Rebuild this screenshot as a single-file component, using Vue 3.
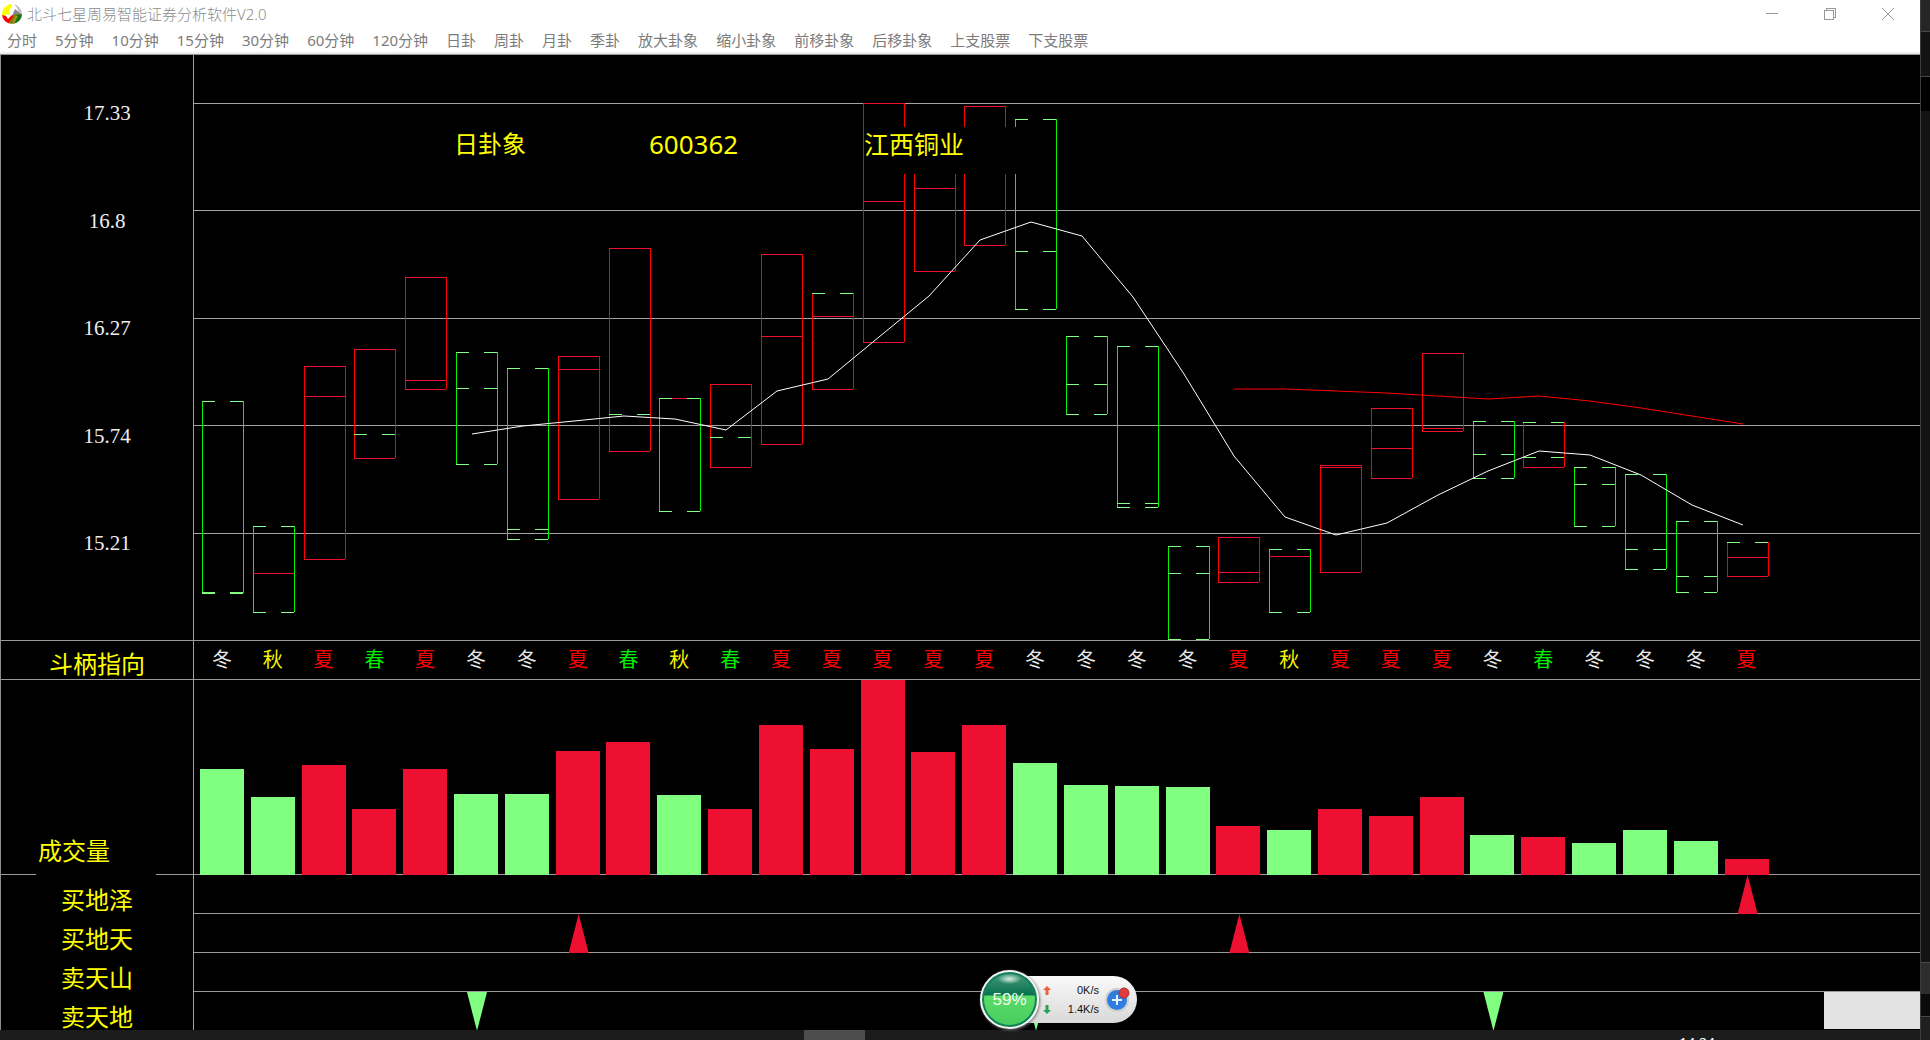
<script setup>
const menus = [
  '分时', '5分钟', '10分钟', '15分钟', '30分钟', '60分钟', '120分钟', '日卦', '周卦', '月卦', '季卦',
  '放大卦象', '缩小卦象', '前移卦象', '后移卦象', '上支股票', '下支股票',
]

const prices = ['17.33', '16.8', '16.27', '15.74', '15.21']
const gridLines = [48, 155, 263, 370, 478]

// Width of one trading period in the plot's own units.
const PITCH = 1728 / 34
const PLOT_TOP = 55

// Each row: side colour, then level pairs [y, line colour].
const candles = [
  ['g', [401, 'g'], [592, 'g'], [593, 'g']],
  ['g', [526, 'g'], [573, 'r'], [612, 'g']],
  ['r', [366, 'r'], [396, 'r'], [559, 'r']],
  ['r', [349, 'r'], [434, 'g'], [458, 'r']],
  ['r', [277, 'r'], [380, 'r'], [389, 'r']],
  ['g', [352, 'g'], [388, 'g'], [464, 'g']],
  ['g', [368, 'g'], [529, 'g'], [539, 'g']],
  ['r', [356, 'r'], [369, 'r'], [499, 'r']],
  ['r', [248, 'r'], [414, 'g'], [451, 'r']],
  ['g', [398, 'r'], [398, 'g'], [511, 'g']],
  ['r', [384, 'r'], [437, 'g'], [467, 'r']],
  ['r', [254, 'r'], [336, 'r'], [444, 'r']],
  ['r', [293, 'g'], [316, 'r'], [389, 'r']],
  ['r', [103, 'r'], [201, 'r'], [342, 'r']],
  ['r', [150, 'r'], [188, 'r'], [271, 'r']],
  ['r', [106, 'r'], [150, 'r'], [245, 'r']],
  ['g', [119, 'g'], [251, 'g'], [309, 'g']],
  ['g', [336, 'g'], [384, 'g'], [414, 'g']],
  ['g', [346, 'g'], [503, 'g'], [507, 'g']],
  ['g', [546, 'g'], [573, 'g'], [639, 'g']],
  ['r', [537, 'r'], [572, 'r'], [582, 'r']],
  ['g', [549, 'g'], [556, 'r'], [612, 'g']],
  ['r', [465, 'r'], [467, 'r'], [572, 'r']],
  ['r', [408, 'r'], [448, 'r'], [478, 'r']],
  ['r', [353, 'r'], [428, 'r'], [431, 'r']],
  ['g', [421, 'g'], [454, 'g'], [478, 'g']],
  ['r', [422, 'g'], [457, 'g'], [467, 'r']],
  ['g', [467, 'g'], [484, 'g'], [526, 'g']],
  ['g', [474, 'g'], [549, 'g'], [569, 'g']],
  ['g', [521, 'g'], [576, 'g'], [592, 'g']],
  ['r', [542, 'g'], [557, 'r'], [576, 'r']],
].map(([side, ...levels], i) => {
  const x = Math.round(8 + i * PITCH)
  const rows = levels.map(([y, tone]) => ({ y: y - PLOT_TOP, tone }))
  return { x, side, rows, top: rows[0].y, bottom: rows[rows.length - 1].y }
})

function levelPath(x, row) {
  return row.tone === 'r'
    ? `M${x} ${row.y}h41`
    : `M${x} ${row.y}h13M${x + 28} ${row.y}h13`
}

function polyline(start, values) {
  return values
    .map((y, i) => `${Math.round(278 + (start + i) * PITCH)},${y - PLOT_TOP}`)
    .join(' ')
}
const fastLine = polyline(0, [
  434, 426, 421, 416, 419, 430, 391, 379, 337, 296, 240, 222, 236, 297, 374, 456, 517, 535, 523,
  495, 471, 451, 455, 475, 505, 525,
])
const slowLine = polyline(15, [389, 389, 391, 393, 396, 399, 396, 401, 408, 416, 424])

const seasons = [...'冬秋夏春夏冬冬夏春秋春夏夏夏夏夏冬冬冬冬夏秋夏夏夏冬春冬冬冬夏']
const seasonClass = { 冬: 'winter', 秋: 'autumn', 夏: 'summer', 春: 'spring' }

const volumes = [
  [106, 'g'], [78, 'g'], [110, 'r'], [66, 'r'], [106, 'r'], [81, 'g'], [81, 'g'], [124, 'r'],
  [133, 'r'], [80, 'g'], [66, 'r'], [150, 'r'], [126, 'r'], [195, 'r'], [123, 'r'], [150, 'r'],
  [112, 'g'], [90, 'g'], [89, 'g'], [88, 'g'], [49, 'r'], [45, 'g'], [66, 'r'], [59, 'r'],
  [78, 'r'], [40, 'g'], [38, 'r'], [32, 'g'], [45, 'g'], [34, 'g'], [16, 'r'],
]

const signals = [
  { name: '买地泽', dir: 'buy', at: [30] },
  { name: '买地天', dir: 'buy', at: [7, 20] },
  { name: '卖天山', dir: 'sell', at: [] },
  { name: '卖天地', dir: 'sell', at: [5, 16, 25] },
]
</script>

<template>
  <div class="desktop">
    <div class="main">
      <header class="titlebar">
        <svg class="logo" width="20" height="20" viewBox="0 0 20 20" aria-hidden="true">
          <defs><clipPath id="ball"><circle cx="10" cy="10" r="10" /></clipPath></defs>
          <g clip-path="url(#ball)">
            <rect width="20" height="20" fill="#fff" />
            <path d="M0 0h10v3L7 6l1 5-3-1-2 2H0z" fill="#ff0" />
            <path d="M12 0h8v11l-3-3-2-4z" fill="#c0c0c0" />
            <path d="M10 12l3-7 4 3 3 3-4 1z" fill="#858585" />
            <path d="M0 11l4 1 2 3 4-4 2 1-5 8H0z" fill="#f00" />
            <path d="M12 11l8-1-10 10H6z" fill="#8a7a00" />
            <path d="M15 11l5-1v10h-9z" fill="#087a10" />
            <path d="M13 12l-3 8h2l4-8z" fill="#a5912a" />
          </g>
        </svg>
        <h1>北斗七星周易智能证券分析软件V2.0</h1>
        <div class="controls">
          <button type="button" aria-label="最小化">
            <svg width="12" height="12" viewBox="0 0 12 12"><path d="M0 5.5h12" /></svg>
          </button>
          <button type="button" aria-label="还原">
            <svg width="12" height="12" viewBox="0 0 12 12"><path d="M.5 2.5h9v9h-9zM2.500 2.500v-2h9v9h-2" /></svg>
          </button>
          <button type="button" aria-label="关闭">
            <svg class="smooth" width="12" height="12" viewBox="0 0 12 12"><path d="M0 0l12 12M12 0L0 12" /></svg>
          </button>
        </div>
      </header>

      <nav class="menu">
        <button v-for="m in menus" :key="m" type="button">{{ m }}</button>
      </nav>

      <main class="board">
        <section class="band price">
          <div class="side scale">
            <span v-for="p in prices" :key="p">{{ p }}</span>
          </div>
          <div class="plot">
            <svg class="chart" viewBox="0 0 1726 585" preserveAspectRatio="none" role="img" aria-label="日卦象">
              <path v-for="y in gridLines" :key="y" class="grid" :d="`M0 ${y}h1726`" />
              <g v-for="(c, i) in candles" :key="i">
                <path :class="['edge', c.side]" :d="`M${c.x} ${c.top}V${c.bottom}M${c.x + 41} ${c.top}V${c.bottom}`" />
                <path v-for="(r, k) in c.rows" :key="k" :class="['level', r.tone]" :d="levelPath(c.x, r)" />
              </g>
              <polyline class="fast" :points="fastLine" />
              <polyline class="slow" :points="slowLine" />
            </svg>
            <div class="caption">
              <span class="kind">日卦象</span>
              <span class="code">600362</span>
              <span class="stock">江西铜业</span>
            </div>
          </div>
        </section>

        <section class="band season">
          <div class="side season-label">斗柄指向</div>
          <div class="plot">
            <div class="columns">
              <span v-for="(s, i) in seasons" :key="i" :class="seasonClass[s]">{{ s }}</span>
            </div>
          </div>
        </section>

        <section class="band volume">
          <div class="side volume-side"><span class="volume-label">成交量</span></div>
          <div class="plot">
            <div class="columns bars">
              <i v-for="(v, i) in volumes" :key="i" :class="['bar', v[1]]" :style="{ height: v[0] + 'px' }"></i>
            </div>
          </div>
        </section>

        <section class="band signals">
          <div class="side signal-names">
            <span v-for="s in signals" :key="s.name">{{ s.name }}</span>
          </div>
          <div class="plot">
            <div v-for="s in signals" :key="s.name" class="signal-row">
              <div class="columns">
                <i v-for="n in 31" :key="n" :class="{ [s.dir]: s.at.includes(n - 1) }"></i>
              </div>
            </div>
            <div class="tray"></div>
          </div>
        </section>
      </main>

      <footer class="taskbar">
        <span class="task"></span>
        <time class="clock">14:24</time>
      </footer>
    </div>

    <aside class="behind">
      <i class="s1"></i><i class="s2"></i><i class="s3"></i><i class="s4"></i><i class="s5"></i><i class="s6"></i><i class="s7"></i>
    </aside>

    <div class="meter">
      <div class="ball">59%</div>
      <div class="pill">
        <div class="rates">
          <div>
            <svg width="8" height="10" viewBox="0 0 8 10"><path d="M4 0l4 4H5.500v5h-3V4H0z" fill="#f0603c" /></svg>
            <span>0K/s</span>
          </div>
          <div>
            <svg width="8" height="10" viewBox="0 0 8 10"><path d="M4 9L0 5h2.500V0h3v5H8z" fill="#2ba05a" /></svg>
            <span>1.4K/s</span>
          </div>
        </div>
        <button type="button" class="boost" aria-label="加速">
          <svg width="28" height="28" viewBox="0 0 28 28">
            <circle cx="13" cy="15" r="12" fill="#cfcfcf" />
            <circle cx="13" cy="15" r="10" fill="#2f7de0" />
            <path d="M13 10v10M8 15h10" stroke="#e8f2ff" stroke-width="2" />
            <circle cx="20" cy="8" r="5" fill="#dc3c3c" stroke="#b83030" />
          </svg>
        </button>
      </div>
    </div>
  </div>
</template>

<style>
body {
  margin: 0;
  background: #1c1c1c;
}
</style>

<style scoped>
.desktop {
  position: relative;
  display: grid;
  grid-template-columns: minmax(0, 1fr) 10px;
  min-height: 100vh;
  overflow: hidden;
  font-family: "Noto Sans", "Noto Sans CJK SC", sans-serif;
}
button {
  padding: 0;
  border: 0;
  background: none;
  font: inherit;
  color: inherit;
}
.main {
  display: flex;
  flex-direction: column;
  background: #fff;
}

.titlebar {
  display: flex;
  align-items: center;
  height: 28px;
  padding-left: 2px;
}
.logo {
  margin-right: 5px;
}
h1 {
  flex: 1;
  margin: 0;
  font-size: 15px;
  font-weight: 300;
  line-height: 28px;
  color: #8c8c8c;
}
.controls {
  display: flex;
  padding-right: 3px;
}
.controls button {
  display: flex;
  align-items: center;
  justify-content: center;
  width: 58px;
  height: 28px;
}
.controls svg {
  fill: none;
  stroke: #999;
  shape-rendering: crispEdges;
}
.controls .smooth {
  shape-rendering: auto;
}

.menu {
  display: flex;
  align-items: flex-start;
  gap: 18px;
  height: 26px;
  padding-left: 7px;
  border-bottom: 1px solid #999;
  background: linear-gradient(#fff 23px, #e4e4e4);
}
.menu button {
  font-size: 15px;
  line-height: 24px;
  color: #7c7c7c;
  white-space: nowrap;
}

.board {
  border-left: 1px solid #8a8a8a;
  background: #000;
  color: #ff0;
  font-size: 24px;
}
.band {
  display: grid;
  grid-template-columns: 192px minmax(0, 1fr);
}
.plot {
  position: relative;
  border-left: 1px solid #a0a0a0;
  overflow: hidden;
}
.scale {
  display: flex;
  flex-direction: column;
  justify-content: space-between;
  align-items: center;
  margin: 47px 0 86px;
  padding-left: 20px;
  font-family: "Liberation Serif", serif;
  font-size: 21px;
  line-height: 22px;
  color: #eee;
}
.chart {
  display: block;
  width: 100%;
  height: 585px;
  fill: none;
}
.chart path,
.chart polyline {
  vector-effect: non-scaling-stroke;
}
.chart path {
  shape-rendering: crispEdges;
}
.grid {
  stroke: #a4a4a4;
}
.edge.g {
  stroke: #00f400;
}
.edge.r {
  stroke: #ff0000;
}
.level.g {
  stroke: #80ff80;
}
.level.r {
  stroke: #f01030;
}
.fast {
  stroke: #fff;
}
.slow {
  stroke: #f00;
}
.caption {
  position: absolute;
  top: 72px;
  left: 0;
  display: grid;
  grid-template-columns: 195px 215px 192px;
  padding-left: 260px;
  line-height: 34px;
}
.code {
  font-size: 26px;
}
.stock {
  height: 47px;
  background: #000;
  font-size: 25px;
}

.season,
.volume {
  border-top: 1px solid #9a9a9a;
}
.season {
  height: 38px;
}
.season-label {
  padding-top: 5px;
  line-height: 36px;
  text-align: center;
}
.columns {
  display: grid;
  grid-template-columns: repeat(34, minmax(0, 1fr));
  width: calc(100% + 2px);
  height: 100%;
}
.columns > * {
  justify-self: center;
  margin-left: 5px;
}
.season .columns {
  font-size: 20px;
  line-height: 37px;
}
.winter {
  color: #e8e8e8;
}
.autumn {
  color: #f4f400;
}
.summer {
  color: #f00;
}
.spring {
  color: #00f000;
}

.volume {
  height: 194px;
}
.volume .plot {
  overflow: visible;
}
.bars {
  height: 195px;
  align-items: end;
  overflow: hidden;
  position: relative;
  z-index: 1;
}
.bar {
  width: 44px;
}
.bar.g {
  background: #80ff80;
}
.bar.r {
  background: #ee1030;
}
.volume-side {
  display: flex;
  align-items: flex-end;
  padding-left: 35px;
}
.volume-label {
  box-sizing: border-box;
  position: relative;
  width: 120px;
  margin-bottom: -1px;
  padding: 0 0 2px 2px;
  background: #000;
  line-height: 46px;
}

.signals {
  height: 156px;
}
.signal-names {
  display: flex;
  flex-direction: column;
  height: 150px;
  padding-top: 5px;
  border-top: 1px solid #9a9a9a;
  overflow: hidden;
  text-align: center;
  line-height: 39px;
}
.signal-row {
  height: 38px;
  border-top: 1px solid #9a9a9a;
}
.columns .buy,
.columns .sell {
  width: 20px;
  height: 39px;
  margin-left: 7px;
}
.buy {
  background: #ee1030;
  clip-path: polygon(50% 0, 100% 100%, 0 100%);
}
.sell {
  background: #80ff80;
  clip-path: polygon(0 0, 100% 0, 50% 100%);
}
.tray {
  position: absolute;
  right: 0;
  bottom: 1px;
  width: 96px;
  height: 37px;
  background: #e3e3e3;
}

.taskbar {
  flex: 1;
  display: flex;
  justify-content: space-between;
  height: 10px;
  overflow: hidden;
  background: #1c1c1c;
}
.task {
  width: 61px;
  margin-left: 804px;
  background: #4d4d4d;
}
.clock {
  box-sizing: border-box;
  height: 10px;
  margin-right: 205px;
  padding-top: 4px;
  font-size: 14px;
  line-height: 18px;
  color: #fff;
}

.behind {
  display: flex;
  flex-direction: column;
  border-left: 1px solid #3c3c3c;
  background: #131313;
}
.s1 { height: 31px; background: #262626; }
.s2 { height: 44px; border-top: 1px solid #484848; }
.s3 { height: 34px; border-top: 1px solid #484848; background: #000; }
.s4 { flex: 1; }
.s5 { height: 31px; border-top: 1px solid #484848; background: #2d2d2d; }
.s6 { height: 22px; background: #0a0a0a; }
.s7 { height: 23px; border-top: 1px solid #484848; background: #202020; }

.meter {
  position: absolute;
  left: calc(50% + 15px);
  bottom: 11px;
  display: flex;
  align-items: center;
  width: 157px;
  height: 60px;
  font-family: "Liberation Sans", sans-serif;
}
.ball {
  position: relative;
  z-index: 1;
  box-sizing: border-box;
  width: 59px;
  height: 59px;
  border: 2px solid #f4f4f4;
  border-radius: 50%;
  background:
    radial-gradient(ellipse 12px 5px at 50% 7px, #d8f0e4, transparent),
    linear-gradient(#4d9c80, #07714e 23px, #5cdc68 24px, #46cc5e);
  box-shadow: inset 0 0 0 2px #138058, 1px 1px 3px #777;
  font-size: 17px;
  line-height: 55px;
  text-align: center;
  color: #f0fff0;
}
.pill {
  display: flex;
  align-items: center;
  justify-content: flex-end;
  box-sizing: border-box;
  width: 128px;
  height: 47px;
  margin-left: -30px;
  padding-right: 5px;
  border-radius: 0 24px 24px 0;
  background: linear-gradient(#fafafa, #d8d8d8);
}
.rates {
  width: 56px;
  padding-top: 2px;
  font-size: 11px;
  line-height: 19px;
  color: #111;
}
.rates div {
  display: flex;
  align-items: center;
  justify-content: space-between;
}
.boost {
  display: flex;
  margin-left: 5px;
}
</style>
